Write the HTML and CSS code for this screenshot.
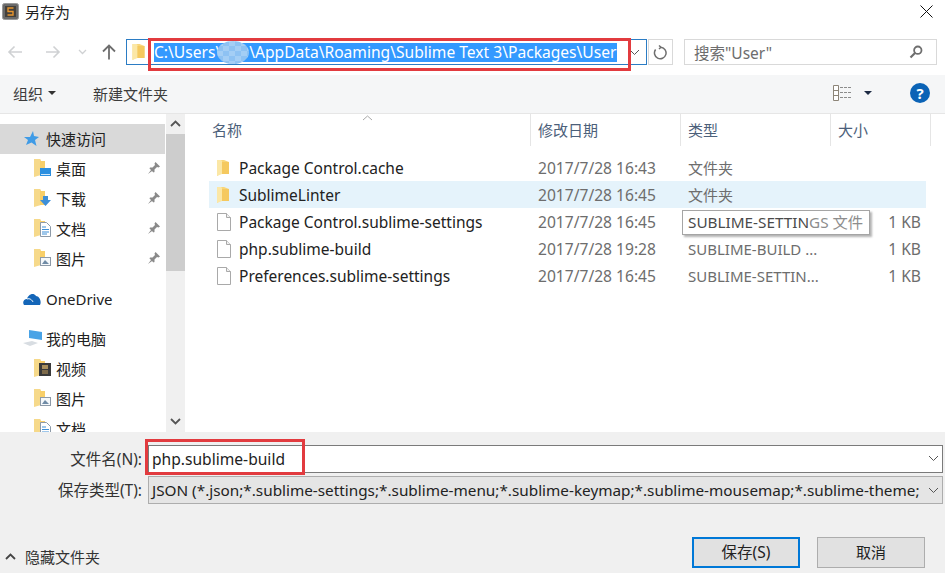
FILE: index.html
```html
<!DOCTYPE html>
<html>
<head>
    <title>另存为</title>
    <link rel="stylesheet" href="styles.css">
</head>
<body>
<svg class="defs" width="0" height="0">
    <symbol id="folder" viewBox="0 0 12 16">
        <path d="M0 0H7L12 2V14H3L0 16Z" fill="#f8d67a"/>
        <path d="M0 0H4L5 1V14L0 16Z" fill="#fbe7a6"/>
        <path d="M5 2H12V14H5Z" fill="#f5c95f"/>
    </symbol>
    <symbol id="navfolder" viewBox="0 0 17 18">
        <path d="M0 0H6L7 1V16L0 18Z" fill="#f6d98a"/>
        <path d="M6 2H11V16H6Z" fill="#f8cf69"/>
    </symbol>
    <symbol id="page" viewBox="0 0 14 18">
        <path d="M.5.5H9.5L13.5 4.5V17.500H.5Z" fill="#fff" stroke="#a9a9a9"/>
        <path d="M9.500.5V4.500H13.500" fill="#f0f0f0" stroke="#a9a9a9"/>
    </symbol>
    <symbol id="pin" viewBox="0 0 14 14">
        <path d="M8.500 1 13 5.500 11.500 6.500 10 6 7.500 8.500 7.500 11 6.500 11.500 2.500 7.500 3 6.500H5.500L8 4 7.500 2.500Z M4 9 1 13 5 10Z" fill="#8a8a8a"/>
    </symbol>
    <symbol id="picture" viewBox="0 0 17 18">
        <use href="#navfolder" width="17" height="18"/>
        <rect x="6.500" y="8.500" width="10" height="8" fill="#f5f8fb" stroke="#8d9aa8"/>
        <path d="M8 15 11 11 15 15Z" fill="#6f8ba6"/>
    </symbol>
    <symbol id="doc" viewBox="0 0 17 18">
        <use href="#navfolder" width="17" height="18"/>
        <path d="M6.500 3.500H12.500L16.500 7.500V17.500H6.500Z" fill="#fff" stroke="#8d9aa8"/>
        <path d="M8 8H12M8 10.500H15M8 13H15M8 15H13" stroke="#3f8fd6"/>
    </symbol>
</svg>

<div class="dialog">
    <div class="titlebar">
        <svg class="app-icon" width="17" height="17" viewBox="0 0 17 17">
            <rect x="0.500" y="0.500" width="16" height="16" rx="2" fill="#6a6a6a" stroke="#9a9a9a"/>
            <path d="M3 3H14V14H3Z" fill="#43403c"/>
            <path d="M11.500 5H6V8.500H11V12H5.500" fill="none" stroke="#e8952e" stroke-width="1.400"/>
        </svg>
        <span class="title">另存为</span>
        <svg class="close" width="13" height="13" viewBox="0 0 13 13">
            <path d="M.5.5 12.500 12.500M12.500.5.5 12.500" stroke="#111" stroke-width="1"/>
        </svg>
    </div>

    <div class="navbar">
        <svg class="nav-arrow" width="16" height="14" viewBox="0 0 16 14"><path d="M15 7H2M7.500 1.500 2 7 7.500 12.500" fill="none" stroke="#cfd1d3" stroke-width="1.600"/></svg>
        <svg class="nav-arrow second" width="16" height="14" viewBox="0 0 16 14"><path d="M1 7H14M8.500 1.500 14 7 8.500 12.500" fill="none" stroke="#cfd1d3" stroke-width="1.600"/></svg>
        <svg class="nav-down" width="9" height="6" viewBox="0 0 9 6"><path d="M1 1 4.500 4.500 8 1" fill="none" stroke="#cfd1d3" stroke-width="1.300"/></svg>
        <svg class="nav-up" width="16" height="16" viewBox="0 0 16 16"><path d="M8 15.500V2M2 7.500 8 1.500 14 7.500" fill="none" stroke="#6e6e6e" stroke-width="1.800"/></svg>
        <div class="address">
            <svg class="addr-folder" width="13" height="16"><use href="#folder"/></svg>
            <span class="path">C:\Users\<span class="blurred"></span>\AppData\Roaming\Sublime Text 3\Packages\User</span>
            <svg class="addr-caret" width="11" height="7" viewBox="0 0 11 7"><path d="M1 1 5.500 5.500 10 1" fill="none" stroke="#555" stroke-width="1"/></svg>
        </div>
        <div class="refresh">
            <svg width="15" height="16" viewBox="0 0 15 16"><path d="M6 1.500 8 3.200 6 5M8 3.200A5.800 5.800 0 1 1 2.600 5.500" fill="none" stroke="#6e6e6e" stroke-width="1.500"/></svg>
        </div>
        <div class="search">
            <span>搜索"User"</span>
            <svg width="14" height="14" viewBox="0 0 14 14"><circle cx="8.800" cy="5.200" r="3.700" fill="none" stroke="#6e6e6e" stroke-width="1.800"/><path d="M6 8 1.500 12.500" stroke="#6e6e6e" stroke-width="2.200"/></svg>
        </div>
    </div>

    <div class="toolbar">
        <span class="tool">组织</span>
        <span class="caret"></span>
        <span class="tool new-folder">新建文件夹</span>
        <svg class="view-icon" width="19" height="16" viewBox="0 0 19 16">
            <path d="M.5.5H5.500V15.500H.5ZM.5 5.500H5.500M.5 10.500H5.500" fill="#fff" stroke="#8d8578"/>
            <path d="M7 2.500H18M7 7.500H18M7 12.500H18" stroke="#8c8c8c" stroke-dasharray="3 1"/>
        </svg>
        <span class="caret dark"></span>
        <span class="help">?</span>
    </div>

    <div class="main">
        <div class="sidebar">
            <div class="nav-row top selected">
                <svg class="nav-icon" width="17" height="17" viewBox="0 0 17 17"><path d="M10 1 11 6 16 7 12 10 13.500 16 8.500 12.500 3 15 5 10 1 7H7Z" fill="#3f9be6"/></svg>
                <span>快速访问</span>
            </div>
            <div class="nav-row sub">
                <svg class="nav-icon" width="17" height="18" viewBox="0 0 17 18"><use href="#navfolder" width="17" height="18"/><rect x="6" y="9" width="11" height="8" fill="#2b8fe0"/><rect x="7" y="15" width="9" height="1" fill="#cfe7fa"/></svg>
                <span>桌面</span>
                <svg class="pin" width="14" height="14"><use href="#pin"/></svg>
            </div>
            <div class="nav-row sub">
                <svg class="nav-icon" width="17" height="18" viewBox="0 0 17 18"><use href="#navfolder" width="17" height="18"/><path d="M9 7H14V11H17L11.500 17 6 11H9Z" fill="#3d8fd8"/></svg>
                <span>下载</span>
                <svg class="pin" width="14" height="14"><use href="#pin"/></svg>
            </div>
            <div class="nav-row sub">
                <svg class="nav-icon" width="17" height="18"><use href="#doc"/></svg>
                <span>文档</span>
                <svg class="pin" width="14" height="14"><use href="#pin"/></svg>
            </div>
            <div class="nav-row sub">
                <svg class="nav-icon" width="17" height="18"><use href="#picture"/></svg>
                <span>图片</span>
                <svg class="pin" width="14" height="14"><use href="#pin"/></svg>
            </div>
            <div class="nav-row top group drive">
                <svg class="nav-icon" width="18" height="12" viewBox="0 0 18 12"><path d="M1 12C-1 9 1 6 4 6 5 2 10-1 13 3 16 3 19 8 17 12Z" fill="#1466b8"/><path d="M4 6C7 5 9 7 10 9" fill="none" stroke="#fff"/></svg>
                <span>OneDrive</span>
            </div>
            <div class="nav-row top group computer">
                <svg class="nav-icon" width="20" height="17" viewBox="0 0 20 17"><path d="M6 0 19 2V10L6 8Z" fill="#49a3e6"/><path d="M0 13 9 11 15 13 7 16Z" fill="#d8dde2"/></svg>
                <span>我的电脑</span>
            </div>
            <div class="nav-row sub">
                <svg class="nav-icon" width="17" height="18" viewBox="0 0 17 18"><use href="#navfolder" width="17" height="18"/><rect x="5" y="4" width="12" height="13" fill="#3a3a3a"/><rect x="8" y="6" width="6" height="4" fill="#a98f5c"/><rect x="8" y="11" width="6" height="4" fill="#7d6a4a"/></svg>
                <span>视频</span>
            </div>
            <div class="nav-row sub">
                <svg class="nav-icon" width="17" height="18"><use href="#picture"/></svg>
                <span>图片</span>
            </div>
            <div class="nav-row sub">
                <svg class="nav-icon" width="17" height="18"><use href="#doc"/></svg>
                <span>文档</span>
            </div>
        </div>

        <div class="scrollbar">
            <svg class="scroll-arrow" width="11" height="7" viewBox="0 0 11 7"><path d="M1 6 5.500 1.500 10 6" fill="none" stroke="#555" stroke-width="1.800"/></svg>
            <div class="thumb"></div>
            <svg class="scroll-arrow bottom" width="11" height="7" viewBox="0 0 11 7"><path d="M1 1 5.500 5.500 10 1" fill="none" stroke="#555" stroke-width="1.800"/></svg>
        </div>

        <div class="files">
            <div class="file-head">
                <span class="col-name">名称</span>
                <span>修改日期</span>
                <span>类型</span>
                <span>大小</span>
            </div>
            <svg class="sort-mark" width="11" height="6" viewBox="0 0 11 6"><path d="M1 5 5.500 1 10 5" fill="none" stroke="#a9a9a9"/></svg>

            <div class="file-row">
                <svg class="file-icon" width="12" height="16"><use href="#folder"/></svg>
                <span class="name">Package Control.cache</span>
                <span class="date">2017/7/28 16:43</span>
                <span class="type">文件夹</span>
                <span class="size"></span>
            </div>
            <div class="file-row selected">
                <svg class="file-icon" width="12" height="16"><use href="#folder"/></svg>
                <span class="name">SublimeLinter</span>
                <span class="date">2017/7/28 16:45</span>
                <span class="type">文件夹</span>
                <span class="size"></span>
            </div>
            <div class="file-row">
                <svg class="file-icon" width="14" height="18"><use href="#page"/></svg>
                <span class="name">Package Control.sublime-settings</span>
                <span class="date">2017/7/28 16:45</span>
                <span class="type"></span>
                <span class="size">1 KB</span>
            </div>
            <div class="file-row">
                <svg class="file-icon" width="14" height="18"><use href="#page"/></svg>
                <span class="name">php.sublime-build</span>
                <span class="date">2017/7/28 19:28</span>
                <span class="type">SUBLIME-BUILD ...</span>
                <span class="size">1 KB</span>
            </div>
            <div class="file-row">
                <svg class="file-icon" width="14" height="18"><use href="#page"/></svg>
                <span class="name">Preferences.sublime-settings</span>
                <span class="date">2017/7/28 16:45</span>
                <span class="type">SUBLIME-SETTIN...</span>
                <span class="size">1 KB</span>
            </div>

            <div class="tooltip">SUBLIME-SETTIN<span class="fade">GS 文件</span></div>
        </div>
    </div>

    <div class="footer">
        <div class="field-row">
            <label class="field-label">文件名(N):</label>
            <div class="field name-field">
                <span>php.sublime-build</span>
                <svg width="11" height="7" viewBox="0 0 11 7"><path d="M1 1 5.500 5.500 10 1" fill="none" stroke="#555"/></svg>
            </div>
        </div>
        <div class="field-row">
            <label class="field-label">保存类型(T):</label>
            <div class="field type-field">
                <span>JSON (*.json;*.sublime-settings;*.sublime-menu;*.sublime-keymap;*.sublime-mousemap;*.sublime-theme;</span>
                <svg width="11" height="7" viewBox="0 0 11 7"><path d="M1 1 5.500 5.500 10 1" fill="none" stroke="#555"/></svg>
            </div>
        </div>
        <div class="actions">
            <div class="hide-folders">
                <svg width="11" height="7" viewBox="0 0 11 7"><path d="M1 6 5.500 1.500 10 6" fill="none" stroke="#444" stroke-width="1.800"/></svg>
                <span>隐藏文件夹</span>
            </div>
            <div class="btn primary">保存(S)</div>
            <div class="btn">取消</div>
        </div>
    </div>

    <div class="mark mark-path"></div>
    <div class="mark mark-file"></div>
</div>
</body>
</html>
```

FILE: styles.css
```css
* {
    box-sizing: border-box;
}

body {
    margin: 0;
    background-color: #fff;
    font-family: "Noto Sans", "Noto Sans CJK SC", sans-serif;
    font-size: 15px;
    color: #1f1f1f;
}

.defs {
    position: absolute;
}

svg {
    display: block;
    flex: none;
}

.dialog {
    position: relative;
    width: 945px;
    height: 573px;
    overflow: hidden;
    display: flex;
    flex-direction: column;
}

.titlebar {
    height: 28px;
    display: flex;
    align-items: center;
    padding: 0 10px 5px 2px;
}

.title {
    margin-left: 6px;
    color: #222;
}

.close {
    margin-left: auto;
    margin-right: 2px;
}

.navbar {
    height: 47px;
    display: flex;
    align-items: center;
    padding: 11px 0 10px;
}

.nav-arrow {
    margin-left: 7px;
}

.nav-arrow.second {
    margin-left: 22px;
}

.nav-down {
    margin-left: 17px;
}

.nav-up {
    margin-left: 14px;
}

.address {
    width: 521px;
    height: 26px;
    margin-left: 9px;
    border: 1px solid #2b7cc4;
    display: flex;
    align-items: center;
    padding: 0 6px 0 5px;
}

.path {
    margin-left: 9px;
    width: 463px;
    height: 19px;
    line-height: 19px;
    background-color: #3399ff;
    color: #fff;
    font-size: 15.6px;
    white-space: nowrap;
}

.blurred {
    display: inline-block;
    width: 32px;
    height: 23px;
    margin: -2px 0 -3px -4px;
    vertical-align: top;
    border-radius: 50%;
    background: repeating-conic-gradient(#8ec2f3 0 25%, #a4cef5 0 50%) 0 0 / 12px 10px;
}

.addr-caret {
    margin-left: auto;
}

.refresh {
    width: 25px;
    height: 26px;
    margin-left: 1px;
    border: 1px solid #d9d9d9;
    display: flex;
    align-items: center;
    justify-content: center;
}

.search {
    width: 253px;
    height: 26px;
    margin-left: 11px;
    border: 1px solid #d9d9d9;
    display: flex;
    align-items: center;
    justify-content: space-between;
    padding: 0 13px 0 9px;
    color: #6d6d6d;
    font-size: 15.5px;
}

.toolbar {
    height: 39px;
    display: flex;
    align-items: center;
    padding: 0 15px 2px 13px;
    background-color: #f5f6f7;
    border-bottom: 1px solid #e6e6e6;
    color: #3c3c3c;
}

.caret {
    width: 0;
    height: 0;
    margin-left: 5px;
    border-left: 4px solid transparent;
    border-right: 4px solid transparent;
    border-top: 4px solid #333;
}

.caret.dark {
    margin-left: 12px;
    border-top-color: #1d2a44;
}

.new-folder {
    margin-left: 37px;
}

.view-icon {
    margin-left: auto;
}

.help {
    width: 20px;
    height: 20px;
    margin-left: 38px;
    border-radius: 50%;
    background-color: #0b63b6;
    color: #fff;
    font-size: 15px;
    font-weight: bold;
    line-height: 20px;
    text-align: center;
}

.main {
    height: 318px;
    display: flex;
}

.sidebar {
    width: 165px;
    overflow: hidden;
    padding-top: 10px;
    flex: none;
}

.nav-row {
    height: 30px;
    display: flex;
    align-items: center;
    padding-bottom: 2px;
    color: #222;
}

.nav-row.selected {
    background-color: #d9d9d9;
}

.nav-row.top {
    padding-left: 23px;
}

.nav-row.top span {
    margin-left: 6px;
}

.nav-row.group {
    margin-top: 10px;
}

.nav-row.drive {
    padding-bottom: 0;
}

.nav-row.drive span {
    margin-left: 5px;
}

.nav-row.computer span {
    margin-left: 3px;
}

.nav-row.sub {
    padding-left: 34px;
}

.nav-row.sub span {
    margin-left: 5px;
}

.nav-row .pin {
    margin-left: auto;
    margin-right: 4px;
}

.scrollbar {
    position: relative;
    width: 19px;
    margin-left: 1px;
    background-color: #f0f0f0;
    flex: none;
}

.scroll-arrow {
    margin: 6px auto 0;
}

.scroll-arrow.bottom {
    position: absolute;
    left: 4px;
    bottom: 7px;
    margin: 0;
}

.thumb {
    height: 137px;
    margin-top: 7px;
    background-color: #cdcdcd;
}

.files {
    position: relative;
    flex: 1;
    padding-left: 24px;
}

.file-head {
    height: 40px;
    display: grid;
    grid-template-columns: 325px 150px 150px 100px;
    margin-left: -3px;
    align-items: start;
    color: #4c607a;
}

.file-head span {
    height: 32px;
    line-height: 32px;
    padding-left: 7px;
    border-right: 1px solid #e5e5e5;
}

.file-head .col-name {
    padding-left: 6px;
}

.sort-mark {
    position: absolute;
    left: 177px;
    top: 1px;
}

.file-row {
    height: 27px;
    display: grid;
    grid-template-columns: 22px 299px 150px 150px 83px;
    align-items: center;
    width: 717px;
    padding-left: 8px;
    font-size: 15.5px;
}

.file-row.selected {
    background-color: #e5f3fb;
}

.file-icon {
    justify-self: start;
}

.name {
    color: #222;
    white-space: nowrap;
}

.date,
.type,
.size {
    color: #6d6d6d;
    white-space: nowrap;
}

.date,
.size {
    font-size: 15.6px;
}

.type {
    font-size: 15px;
}

.size {
    text-align: right;
}

.tooltip {
    position: absolute;
    left: 497px;
    top: 96px;
    width: 188px;
    height: 25px;
    padding-left: 5px;
    line-height: 23px;
    font-size: 15.3px;
    background-color: #fff;
    border: 1px solid #a5a5a5;
    box-shadow: 2px 2px 2px rgba(0, 0, 0, 0.3);
    color: #4a4a4a;
    white-space: nowrap;
}

.tooltip .fade {
    color: #8d8d8d;
}

.footer {
    flex: 1;
    background-color: #f0f0f0;
    padding-top: 13px;
}

.field-row {
    height: 31px;
    display: flex;
    align-items: flex-start;
}

.field-label {
    width: 142px;
    text-align: right;
    line-height: 28px;
    font-size: 15.5px;
    color: #333;
}

.field {
    width: 795px;
    height: 28px;
    margin-left: 6px;
    display: flex;
    align-items: center;
    justify-content: space-between;
    padding: 0 3px 0 3px;
    border: 1px solid #7a7a7a;
    white-space: nowrap;
    overflow: hidden;
    font-size: 15.6px;
    color: #222;
}

.name-field {
    background-color: #fff;
    padding-bottom: 1px;
}

.type-field {
    background-color: #e5e5e5;
    border-color: #adadad;
    font-size: 15.3px;
}

.actions {
    height: 31px;
    margin-top: 30px;
    display: flex;
    align-items: center;
    padding-left: 5px;
}

.hide-folders {
    display: flex;
    align-items: center;
    gap: 9px;
    margin-top: 8px;
    margin-right: auto;
    color: #333;
}

.btn {
    width: 108px;
    height: 31px;
    margin-right: 20px;
    border: 1px solid #adadad;
    background-color: #e1e1e1;
    line-height: 28px;
    text-align: center;
    color: #222;
}

.btn.primary {
    margin-right: 17px;
    border: 2px solid #0078d7;
    line-height: 26px;
    font-size: 15.5px;
}

/* red annotation boxes drawn on top of the dialog */
.mark {
    position: absolute;
    border: 3px solid #e23b3f;
}

.mark-path {
    left: 148px;
    top: 38px;
    width: 483px;
    height: 33px;
}

.mark-file {
    left: 145px;
    top: 439px;
    width: 160px;
    height: 36px;
}
```
